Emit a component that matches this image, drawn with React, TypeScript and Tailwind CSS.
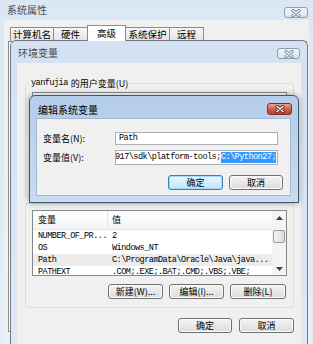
import React from 'react';

const MONO = "font-['Liberation_Mono',monospace] text-[8.5px] tracking-[-0.5px]";

function CloseGlyph({ active = false }: { active?: boolean }) {
  return (
    <svg width="10" height="8" viewBox="0 0 10 8">
      <path
        d="M2 1.5 L8 6.5 M8 1.5 L2 6.5"
        stroke={active ? '#6b1f1a' : '#7d8898'}
        strokeWidth="3.2"
        strokeLinecap="round"
      />
      <path
        d="M2 1.5 L8 6.5 M8 1.5 L2 6.5"
        stroke={active ? '#ffffff' : '#eef2f7'}
        strokeWidth="1.5"
        strokeLinecap="round"
      />
    </svg>
  );
}

function CloseButton({ active = false, className = '' }: { active?: boolean; className?: string }) {
  return (
    <div
      className={
        active
          ? `flex items-center justify-center rounded-[3px] border border-[#7a2f28] bg-gradient-to-b from-[#e8a493] via-[#d0614c] to-[#c0392b] ${className}`
          : `flex items-center justify-center rounded-[3px] border border-[#8f9cac] bg-gradient-to-b from-[#f1f5fa] to-[#d9e3ef] ${className}`
      }
    >
      <CloseGlyph active={active} />
    </div>
  );
}

function Button({ label, width, primary = false }: { label: React.ReactNode; width: string; primary?: boolean }) {
  return (
    <div
      className={`${width} flex h-[15px] items-center justify-center rounded-[3px] border text-[9px] leading-none ${
        primary
          ? 'border-[#3c7fb1] bg-gradient-to-b from-[#eaf6fd] to-[#bee6fd] shadow-[inset_0_0_0_1px_#a8d8f5]'
          : 'border-[#707070] bg-gradient-to-b from-[#f4f4f4] to-[#dcdcdc] shadow-[inset_0_0_0_1px_#fcfcfc]'
      }`}
    >
      {label}
    </div>
  );
}

const TABS = [
  { name: '计算机名', w: 'w-[44px]' },
  { name: '硬件', w: 'w-[35px]' },
  { name: '高级', w: 'w-[39px]', active: true },
  { name: '系统保护', w: 'w-[45px]' },
  { name: '远程', w: 'w-[35px]' },
];

const ROWS = [
  { name: 'NUMBER_OF_PR...', value: '2' },
  { name: 'OS', value: 'Windows_NT' },
  { name: 'Path', value: 'C:\\ProgramData\\Oracle\\Java\\java...', selected: true },
  { name: 'PATHEXT', value: '.COM;.EXE;.BAT;.CMD;.VBS;.VBE;' },
];

export default function App() {
  return (
    <div className="relative h-[344px] w-[313px] overflow-hidden bg-[#d9e5f3] font-['Noto_Sans_CJK_SC',sans-serif] text-[9px] text-black">
      {/* 系统属性 */}
      <div className="flex h-full flex-col bg-gradient-to-b from-[#dce7f4] to-[#e4edf8]">
        <div className="flex h-[20px] items-start justify-between pl-[7px] pr-[5px]">
          <span className="mt-[4px] text-[10px] leading-[12px] text-[#4b4b4b]">系统属性</span>
          <CloseButton className="mt-[7px] h-[11px] w-[24px]" />
        </div>
        <div className="mx-[4px] mb-[4px] flex flex-1 flex-col bg-[#f0f0f0] pt-[5px]">
          <div className="flex h-[16px] items-end pl-[7px]">
            {TABS.map((t) =>
              t.active ? (
                <div
                  key={t.name}
                  className={`${t.w} relative z-10 -ml-px flex h-[16px] items-start justify-center border border-b-0 border-[#898c95] bg-white pt-[1px] text-[9.5px] leading-[12px]`}
                >
                  {t.name}
                </div>
              ) : (
                <div
                  key={t.name}
                  className={`${t.w} -ml-px flex h-[14px] items-center justify-center border border-b-0 border-[#898c95] bg-gradient-to-b from-[#f6f6f6] to-[#e3e3e3] text-[9.5px] leading-none`}
                >
                  {t.name}
                </div>
              )
            )}
          </div>
          <div className="mb-[8px] ml-[4px] mr-[2px] flex-1 border border-[#898c95] bg-[#fbfbfb]" />
        </div>
      </div>

      {/* 环境变量 */}
      <div className="absolute left-[10px] top-[40px] flex h-[310px] w-[298px] flex-col rounded-t-[6px] border border-[#6e7a89] bg-gradient-to-b from-[#d3e1f1] to-[#dfe9f5]">
        <div className="flex h-[22px] items-start justify-between pl-[7px] pr-[7px]">
          <span className="mt-[6px] text-[10px] leading-[12px] text-[#4b4b4b]">环境变量</span>
          <CloseButton className="mt-[7px] h-[11px] w-[23px]" />
        </div>
        <div className="mx-[6px] flex flex-1 flex-col bg-[#f0f0f0] pl-[8px] pr-[7px] pt-[20px]">
          {/* user group */}
          <div className="relative h-[115px] rounded-[3px] border border-[#d5dfe5] px-[6px] pt-[8px]">
            <div className="absolute -top-[6px] left-[3px] flex items-center gap-[3px] bg-[#f0f0f0] px-[2px] leading-[11px]">
              <span className={MONO}>yanfujia</span>
              <span className="text-[9px]">的用户变量(U)</span>
            </div>
            <div className="h-[90px] border border-[#828790] bg-white" />
          </div>

          {/* system group */}
          <div className="mt-[5px] flex h-[105px] flex-col rounded-[3px] border border-[#d5dfe5] px-[6px] pt-[6px]">
            <div className="flex h-[66px] overflow-hidden border border-[#828790] bg-white">
              <div className="flex flex-1 flex-col">
                <div className="flex h-[19px] shrink-0 items-center border-b border-[#e5e5e5] bg-gradient-to-b from-white to-[#f3f4f6]">
                  <div className="flex h-full w-[75px] items-center border-r border-[#e3e5e8] pl-[5px]">变量</div>
                  <div className="pl-[4px]">值</div>
                </div>
                {ROWS.map((r) => (
                  <div
                    key={r.name}
                    className={`flex h-[12px] shrink-0 items-center whitespace-nowrap ${r.selected ? 'bg-[#ececec]' : ''}`}
                  >
                    <div className={`${MONO} w-[75px] pl-[5px] leading-none`}>{r.name}</div>
                    <div className={`${MONO} pl-[4px] leading-none`}>{r.value}</div>
                  </div>
                ))}
              </div>
              <div className="flex w-[14px] flex-col bg-[#f4f4f4]">
                <div className="flex h-[13px] items-center justify-center">
                  <svg width="7" height="4" viewBox="0 0 7 4">
                    <path d="M0 4 L3.5 0 L7 4 Z" fill="#404040" />
                  </svg>
                </div>
                <div className="mx-[1px] mt-[6px] h-[13px] rounded-[2px] border border-[#9a9a9a] bg-gradient-to-r from-[#f3f3f3] to-[#dcdcdc]" />
                <div className="flex-1" />
                <div className="flex h-[13px] items-center justify-center">
                  <svg width="7" height="4" viewBox="0 0 7 4">
                    <path d="M0 0 L7 0 L3.5 4 Z" fill="#404040" />
                  </svg>
                </div>
              </div>
            </div>
            <div className="mt-[8px] flex justify-end gap-[6px] pr-[1px]">
              <Button width="w-[55px]" label={<span>新建(W)...</span>} />
              <Button width="w-[55px]" label={<span>编辑(I)...</span>} />
              <Button width="w-[56px]" label={<span>删除(L)</span>} />
            </div>
          </div>

          <div className="mt-[10px] flex justify-end gap-[7px]">
            <Button width="w-[54px]" label="确定" />
            <Button width="w-[55px]" label="取消" />
          </div>
        </div>
      </div>

      {/* 编辑系统变量 */}
      <div className="absolute left-[29px] top-[95px] flex h-[108px] w-[270px] flex-col rounded-t-[6px] border border-[#3f5670] bg-gradient-to-b from-[#b5cdea] to-[#c8dbf0] shadow-[0_0_6px_rgba(0,0,0,0.35)]">
        <div className="flex h-[22px] items-start justify-between pl-[8px] pr-[6px]">
          <span className="mt-[8px] text-[10px] leading-[12px] text-black">编辑系统变量</span>
          <CloseButton active className="mt-[7px] h-[12px] w-[25px]" />
        </div>
        <div className="mb-[6px] ml-[6px] mr-[7px] flex flex-1 flex-col border border-[#a3b9d3] bg-[#f0f0f0] pt-[13px]">
          <div className="flex h-[13px] items-center">
            <div className="w-[78px] shrink-0 whitespace-nowrap pl-[6px] leading-none">变量名(N):</div>
            <div className="flex h-[13px] w-[163px] items-center border border-[#abadb3] bg-white pl-[3px]">
              <span className={`${MONO} leading-none`}>Path</span>
            </div>
          </div>
          <div className="mt-[5px] flex h-[15px] items-center">
            <div className="w-[78px] shrink-0 whitespace-nowrap pl-[6px] leading-none">变量值(V):</div>
            <div className="flex h-[15px] w-[163px] items-center justify-end overflow-hidden whitespace-nowrap border border-[#abadb3] bg-white pr-[1px]">
              <span className={`${MONO} shrink-0 leading-none`}>0917\sdk\platform-tools;</span>
              <span className={`${MONO} shrink-0 bg-[#3399ff] leading-[11px] text-white`}>C:\Python27;</span>
            </div>
          </div>
          <div className="mt-[10px] flex justify-end gap-[6px] pr-[7px]">
            <Button width="w-[55px]" label="确定" primary />
            <Button width="w-[54px]" label="取消" />
          </div>
        </div>
      </div>
    </div>
  );
}
